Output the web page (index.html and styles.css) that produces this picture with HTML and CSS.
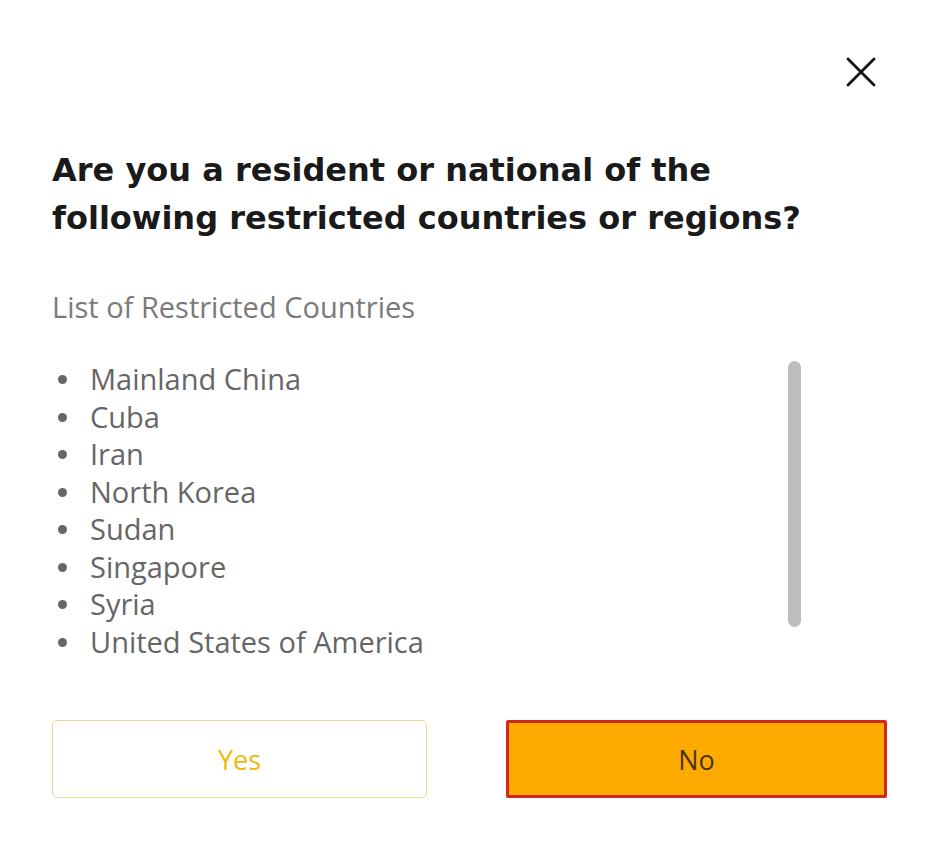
FILE: index.html
```html
<!DOCTYPE html>
<html lang="en">
<head>
<meta charset="utf-8">
<link rel="stylesheet" href="styles.css">
</head>
<body>
<div class="modal">
  <div class="top">
    <button class="close" aria-label="Close">
      <svg width="30" height="30" viewBox="0 0 30 30"><path d="M2 2 L28 28 M28 2 L2 28" stroke="#111" stroke-width="2.8" stroke-linecap="round" fill="none"/></svg>
    </button>
  </div>
  <h1 class="title">Are you a resident or national of the following restricted countries or regions?</h1>
  <p class="subtitle">List of Restricted Countries</p>
  <div class="listwrap">
    <ul class="list">
      <li>Mainland China</li>
      <li>Cuba</li>
      <li>Iran</li>
      <li>North Korea</li>
      <li>Sudan</li>
      <li>Singapore</li>
      <li>Syria</li>
      <li>United States of America</li>
    </ul>
    <div class="scroll"><div class="thumb"></div></div>
  </div>
  <div class="actions">
    <button class="btn yes">Yes</button>
    <button class="btn no">No</button>
  </div>
</div>
</body>
</html>
```
FILE: styles.css
```css
html, body { margin: 0; padding: 0; background: #fff; }
body { font-family: "Open Sans", "Noto Sans", sans-serif; }
.modal { width: 928px; height: 862px; box-sizing: border-box; padding: 57px 41px 0 52px; }
.top { display: flex; justify-content: flex-end; height: 30px; }
.close { border: 0; background: none; padding: 0; width: 30px; height: 30px; margin-right: 11px; cursor: pointer; }
.close svg { display: block; }
.title { margin: 59px 0 0; font-family: "DejaVu Sans", sans-serif; font-size: 32px; line-height: 48px; font-weight: 700; color: #1a1a1a; max-width: 800px; }
.subtitle { margin: 48px 0 0; font-size: 29px; line-height: 34px; color: #7a7a7a; }
.listwrap { display: flex; margin-top: 36px; }
.list { margin: 0; padding: 0; list-style: none; flex: 1; }
.list li { position: relative; padding-left: 38px; font-size: 29px; line-height: 37.5px; color: #666; }
.list li::before { content: ""; position: absolute; left: 6px; top: 15px; width: 9px; height: 9px; border-radius: 50%; background: #666; }
.scroll { width: 13px; margin-right: 86px; padding-top: 1px; }
.thumb { width: 13px; height: 266px; border-radius: 7px; background: #bdbdbd; }
.actions { display: flex; gap: 79px; margin-top: 60px; }
.btn { height: 78px; font-family: "Open Sans", "Noto Sans", sans-serif; font-size: 27px; cursor: pointer; }
.yes { width: 375px; background: #fff; border: 1.5px solid #eed690; border-radius: 5px; color: #f0b90b; }
.no { width: 381px; background: #ffaa00; border: 3px solid #d0281a; border-radius: 2px; color: #4a3410; }
```
